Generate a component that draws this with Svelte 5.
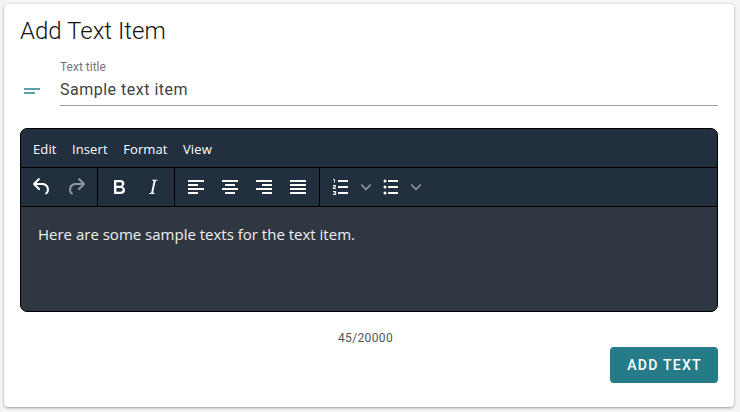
<script>
	let title = $state('Sample text item')
	const text = 'Here are some sample texts for the text item.'
	const menus = ['Edit', 'Insert', 'Format', 'View']
	const undoPath = 'M6.4 8H12c3.7 0 6.2 2 6.8 5.1.6 2.7-.4 5.6-2.8 6.4a1 1 0 0 1-.6-1.8c1.2-.4 1.7-2.1 1.4-4.2-.5-2.2-2.2-3.5-4.8-3.5H6.4l3.3 3.3a1 1 0 1 1-1.4 1.4l-5-5a1 1 0 0 1 0-1.4l5-5a1 1 0 0 1 1.4 1.4L6.4 8Z'
	const alignRows = {
		left: [[4, 16], [4, 10], [4, 16], [4, 10]],
		center: [[4, 16], [7, 10], [4, 16], [7, 10]],
		right: [[4, 16], [10, 10], [4, 16], [10, 10]],
		justify: [[4, 16], [4, 16], [4, 16], [4, 16]]
	}
</script>

{#snippet bars(rows)}
	<svg width="24" height="24" viewBox="0 0 24 24">
		{#each rows as [x, w], i}
			<rect {x} y={5 + i * 4} width={w} height="2" rx="0.6" fill="#fff" />
		{/each}
	</svg>
{/snippet}

{#snippet listRows()}
	<rect x="9" y="5" width="10" height="2" rx="0.6" fill="#fff" />
	<rect x="9" y="11" width="10" height="2" rx="0.6" fill="#fff" />
	<rect x="9" y="17" width="10" height="2" rx="0.6" fill="#fff" />
{/snippet}

{#snippet chevron()}
	<svg class="chev" width="10" height="10" viewBox="0 0 10 10">
		<path d="M0.2 2.5 5 7.3 9.8 2.5" fill="none" stroke="#fff" stroke-width="1.6" />
	</svg>
{/snippet}

<main class="card">
	<h1>Add Text Item</h1>

	<div class="field">
		<svg class="field-icon" width="24" height="24" viewBox="0 0 24 24">
			<rect x="4" y="10" width="16" height="2" fill="#5f9ea6" />
			<rect x="4" y="14" width="11" height="2" fill="#5f9ea6" />
		</svg>
		<label class="input-wrap">
			<span>Text title</span>
			<input bind:value={title} />
		</label>
	</div>

	<div class="editor">
		<div class="menubar">
			{#each menus as m}
				<span class="menu">{m}</span>
			{/each}
		</div>
		<div class="toolbar">
			<div class="group">
				<button aria-label="Undo">
					<svg width="24" height="24" viewBox="0 0 24 24">
						<path fill="#fff" d={undoPath} />
					</svg>
				</button>
				<button class="off" aria-label="Redo">
					<svg width="24" height="24" viewBox="0 0 24 24">
						<path fill="#fff" transform="matrix(-1 0 0 1 24 0)" d={undoPath} />
					</svg>
				</button>
			</div>
			<div class="group">
				<button aria-label="Bold">
					<svg width="24" height="24" viewBox="0 0 24 24">
						<path fill="#fff" d="M7.8 19c-.3 0-.5 0-.6-.2l-.2-.5V5.7c0-.2 0-.4.2-.5l.6-.2h5c1.5 0 2.7.3 3.5 1 .7.6 1.1 1.4 1.1 2.5a3 3 0 0 1-.6 1.9c-.4.6-1 1-1.6 1.2.4.1.9.3 1.3.6s.8.7 1 1.2c.4.4.5 1 .5 1.6 0 1.3-.4 2.3-1.3 3-.8.7-2.1 1-3.8 1H7.8Zm5-8.3c.6 0 1.2-.1 1.6-.5.4-.3.6-.7.6-1.3 0-1.1-.8-1.7-2.3-1.7H9.3v3.5h3.4Zm.5 6c.7 0 1.3-.1 1.7-.4.4-.4.6-.9.6-1.5s-.2-1-.7-1.4c-.4-.3-1-.4-2-.4H9.4v3.8h4Z" />
					</svg>
				</button>
				<button aria-label="Italic">
					<svg width="24" height="24" viewBox="0 0 24 24">
						<path fill="#fff" d="m16.7 4.7-.1.9h-.3c-.6 0-1 0-1.4.3-.3.3-.4.6-.5 1.1l-2.1 9.8v.6c0 .5.4.8 1.4.8h.2l-.2.8H8l.2-.8h.2c1.1 0 1.8-.5 2-1.5l2-9.8.1-.5c0-.6-.4-.8-1.4-.8h-.3l.2-.9h5.8Z" />
					</svg>
				</button>
			</div>
			<div class="group">
				{#each Object.entries(alignRows) as [name, rows]}
					<button aria-label={name}>{@render bars(rows)}</button>
				{/each}
			</div>
			<div class="group last">
				<button aria-label="Numbered list">
					<svg width="24" height="24" viewBox="0 0 24 24">
						{@render listRows()}
						<path fill="none" stroke="#fff" stroke-width="1" d="M4.2 4.5h1.3v3M4 10.5h2.5v1.5H4.3v1.5h2.5M4 16.5h2.7v3H4M4.6 18h2" />
					</svg>
				</button>
				<button class="more" aria-label="Numbered list options">{@render chevron()}</button>
				<button aria-label="Bullet list">
					<svg width="24" height="24" viewBox="0 0 24 24">
						{@render listRows()}
						<circle cx="6" cy="6" r="1.5" fill="#fff" />
						<circle cx="6" cy="12" r="1.5" fill="#fff" />
						<circle cx="6" cy="18" r="1.5" fill="#fff" />
					</svg>
				</button>
				<button class="more" aria-label="Bullet list options">{@render chevron()}</button>
			</div>
		</div>
		<div class="content">
			<p>{text}</p>
		</div>
	</div>

	<div class="count">{text.length}/20000</div>

	<div class="actions">
		<button class="submit">Add Text</button>
	</div>
</main>

<style>
	:global(body) {
		background: #f5f5f5;
		font-family: Roboto, sans-serif;
	}

	.card {
		box-sizing: border-box;
		width: 730px;
		height: 403px;
		margin: 4px 6px 5px 4px;
		padding: 16px;
		background: #fff;
		border-radius: 4px;
		box-shadow:
			0 1px 3px rgba(0, 0, 0, 0.35),
			0 0 2px rgba(0, 0, 0, 0.08);
	}

	h1 {
		margin: 0;
		font-size: 24px;
		font-weight: 300;
		line-height: 22px;
		color: #111;
	}

	.field {
		display: flex;
		align-items: center;
		gap: 16px;
		margin-top: 18px;
	}

	.field-icon {
		flex: none;
		margin: 14px 0 0 0;
	}

	.input-wrap {
		flex: 1;
		display: flex;
		flex-direction: column;
		border-bottom: 1px solid #9e9e9e;
		padding-bottom: 5px;
	}

	.input-wrap span {
		font-size: 12px;
		line-height: 14px;
		color: #757575;
	}

	input {
		border: 0;
		outline: 0;
		padding: 0;
		margin-top: 6px;
		height: 20px;
		font: 400 16px/20px Roboto, sans-serif;
		letter-spacing: 0.5px;
		color: #424242;
		background: transparent;
	}

	.editor {
		height: 182px;
		margin-top: 22px;
		display: flex;
		flex-direction: column;
		background: #2f3742;
		border: 1px solid #000;
		border-radius: 7px;
		overflow: hidden;
		font-family: "Open Sans", sans-serif;
	}

	.menubar {
		flex: none;
		height: 36px;
		display: flex;
		align-items: center;
		gap: 15.5px;
		padding: 2px 0 0 12px;
		background: #222f3e;
		border-bottom: 1px solid #000;
	}

	.menu {
		font-size: 13px;
		font-weight: 500;
		letter-spacing: 0.1px;
		color: #fff;
	}

	.toolbar {
		flex: none;
		height: 38px;
		display: flex;
		background: #222f3e;
		border-bottom: 1px solid #000;
	}

	.group {
		display: flex;
		align-items: center;
		padding: 0 4px;
		border-right: 1px solid #000;
	}

	.group.last {
		border-right: 0;
	}

	.group button {
		width: 34px;
		height: 34px;
		padding: 0;
		border: 0;
		background: none;
		display: flex;
		align-items: center;
		justify-content: center;
	}

	.group button.more {
		width: 16px;
	}

	.off svg {
		opacity: 0.5;
	}

	.chev {
		opacity: 0.5;
	}

	.content {
		flex: 1;
		padding: 16px 17px;
	}

	.content p {
		margin: 0;
		font-size: 15px;
		line-height: 22px;
		color: #f0f0f0;
	}

	.count {
		margin-top: 19px;
		padding-right: 7px;
		text-align: center;
		font-size: 12px;
		line-height: 14px;
		letter-spacing: 0.35px;
		color: #555;
	}

	.actions {
		display: flex;
		justify-content: flex-end;
		margin-top: 2px;
	}

	.submit {
		width: 108px;
		height: 36px;
		padding: 0 0 0 1px;
		border: 0;
		border-radius: 4px;
		background: #267b88;
		color: #fff;
		font: 500 14px Roboto, sans-serif;
		letter-spacing: 1.25px;
		text-transform: uppercase;
	}
</style>
